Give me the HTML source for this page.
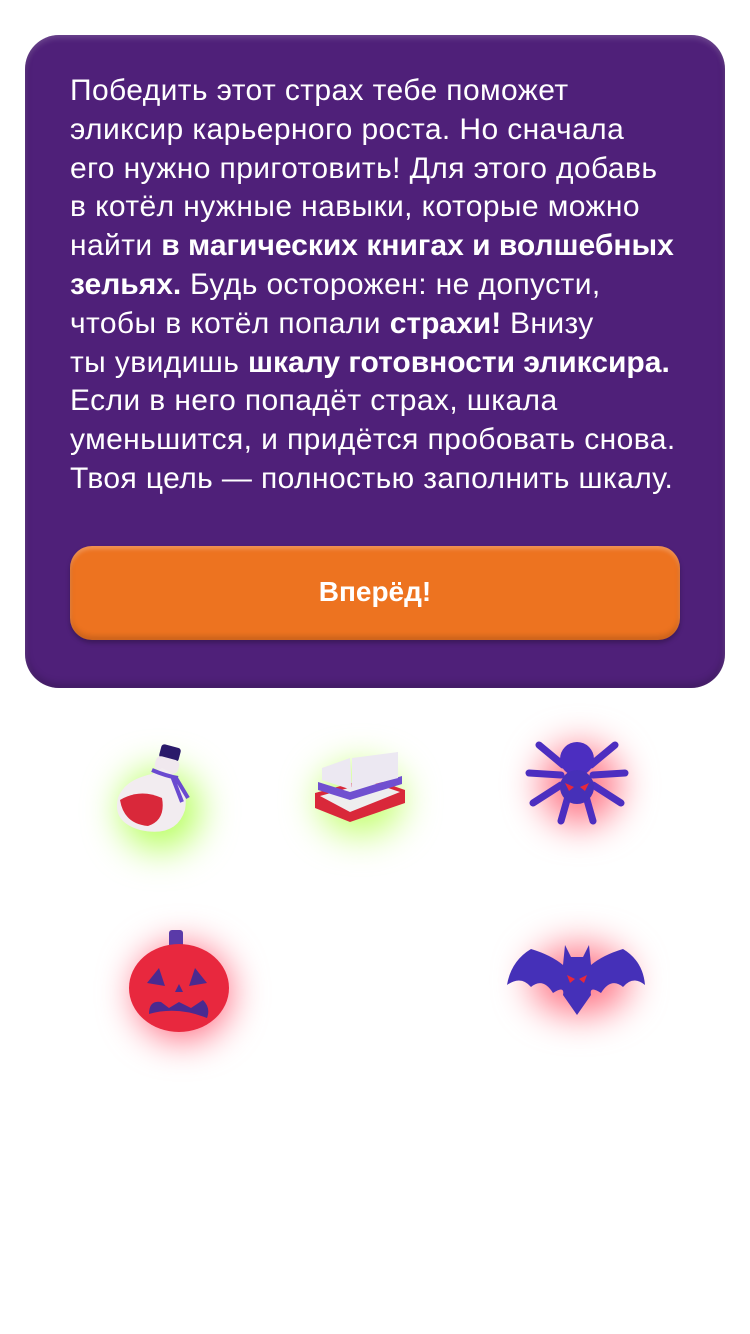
<!DOCTYPE html>
<html><head><meta charset="utf-8"><style>
body{margin:0;width:750px;height:1334px;background:#fff;position:relative;overflow:hidden;font-family:"Liberation Sans",sans-serif}
.panel{position:absolute;left:25px;top:35px;width:700px;height:653px;background:#4f2079;border-radius:34px;box-shadow:inset 0 3px 6px rgba(255,255,255,.18),inset 0 -4px 8px rgba(0,0,0,.2)}
.txt{position:absolute;left:70px;top:72px;width:640px;color:#fff;font-size:30px;line-height:38.8px;letter-spacing:0.4px;white-space:nowrap}
.txt b{font-weight:700;letter-spacing:0}
.btn{position:absolute;left:70px;top:546px;width:610px;height:94px;background:#ed7320;border-radius:22px;box-shadow:inset 0 3px 4px rgba(255,255,255,.25),inset 0 -4px 6px rgba(0,0,0,.15),0 3px 5px rgba(0,0,0,.25);color:#fff;font-weight:700;font-size:28px;text-align:center;line-height:92px}
.glow{position:absolute;border-radius:50%;filter:blur(18px)}
svg{position:absolute}
</style></head><body>
<div class="panel"></div>
<div class="txt">Победить этот страх тебе поможет<br>эликсир карьерного роста. Но сначала<br>его нужно приготовить! Для этого добавь<br>в котёл нужные навыки, которые можно<br>найти <b>в магических книгах и волшебных</b><br><b>зельях.</b> Будь осторожен: не допусти,<br>чтобы в котёл попали <b>страхи!</b> Внизу<br>ты увидишь <b>шкалу готовности эликсира.</b><br>Если в него попадёт страх, шкала<br>уменьшится, и придётся пробовать снова.<br>Твоя цель — полностью заполнить шкалу.</div>
<div class="btn">Вперёд!</div>

<div class="glow" style="left:120px;top:770px;width:80px;height:80px;background:#b8ff60"></div>
<div class="glow" style="left:318px;top:765px;width:85px;height:70px;background:#c4ff70"></div>
<div class="glow" style="left:540px;top:745px;width:80px;height:80px;background:#ff7a8a"></div>
<div class="glow" style="left:135px;top:945px;width:95px;height:95px;background:#ff6a80"></div>
<div class="glow" style="left:530px;top:945px;width:100px;height:70px;background:#ff7a8a"></div>

<svg style="left:110px;top:740px" width="100" height="100" viewBox="0 0 100 100">
<rect x="50" y="6" width="20" height="14" rx="3" fill="#2a1a6a" transform="rotate(15 60 13)"/>
<rect x="45" y="18" width="24" height="14" rx="5" fill="#f0e8ee" transform="rotate(15 57 25)"/>
<path d="M52 28 Q80 40 75 70 Q66 98 30 90 Q2 82 8 58 Q14 40 42 34Z" fill="#f2ecf0"/>
<path d="M10 60 Q30 48 52 58 Q56 80 38 86 Q14 84 10 60Z" fill="#d9283a"/>
<path d="M42 30 Q56 36 68 38 M62 36 L72 62 M66 38 L78 58" stroke="#6a4ad0" stroke-width="4" fill="none"/>
</svg>
<svg style="left:310px;top:748px" width="100" height="80" viewBox="0 0 100 80">
<path d="M5 45 L60 30 L95 42 L95 55 L40 74 L5 60Z" fill="#d9283a"/>
<path d="M10 48 L60 34 L90 44 L40 64Z" fill="#eee"/>
<path d="M8 34 L40 44 L92 28 L92 36 L40 52 L8 42Z" fill="#7050d0"/>
<path d="M12 20 L40 10 L42 42 L12 32Z M42 10 L88 4 L88 30 L42 42Z" fill="#ece8f2"/>
</svg>
<svg style="left:525px;top:735px" width="105" height="90" viewBox="0 0 105 90">
<g stroke="#4c2ec0" stroke-width="7" stroke-linecap="round" fill="none">
<path d="M38 30 L14 10 M36 40 L4 38 M36 50 L8 68 M44 58 L36 86 M66 30 L90 10 M68 40 L100 38 M68 50 L96 68 M60 58 L68 86"/></g>
<circle cx="52" cy="24" r="17" fill="#4c2ec0"/><circle cx="52" cy="52" r="17" fill="#4630b8"/>
<path d="M40 48 L49 52 L44 56Z M64 48 L55 52 L60 56Z" fill="#e8283a"/>
</svg>
<svg style="left:125px;top:928px" width="110" height="105" viewBox="0 0 110 105">
<rect x="44" y="2" width="14" height="28" rx="3" fill="#5a3aa8"/>
<ellipse cx="54" cy="60" rx="50" ry="44" fill="#e8283e"/>
<path d="M22 55 L34 40 L40 58Z M82 55 L70 40 L64 58Z M50 64 L54 56 L58 64Z M24 86 Q24 72 36 74 L44 80 L54 74 L66 80 L78 72 Q86 80 82 90 Q52 78 24 86Z" fill="#4a2a90"/>
</svg>
<svg style="left:505px;top:935px" width="145" height="85" viewBox="0 0 145 85">
<path d="M60 10 L66 22 L78 22 L84 10 L86 30 Q98 20 118 14 Q138 26 140 50 Q128 40 118 52 Q106 42 96 58 Q84 50 86 60 L72 80 L58 60 Q60 50 48 58 Q38 42 26 52 Q16 40 2 50 Q6 26 26 14 Q46 20 58 30Z" fill="#4530b8"/>
<path d="M62 40 L70 44 L65 48Z M82 40 L74 44 L79 48Z" fill="#e8283a"/>
</svg>
</body></html>
